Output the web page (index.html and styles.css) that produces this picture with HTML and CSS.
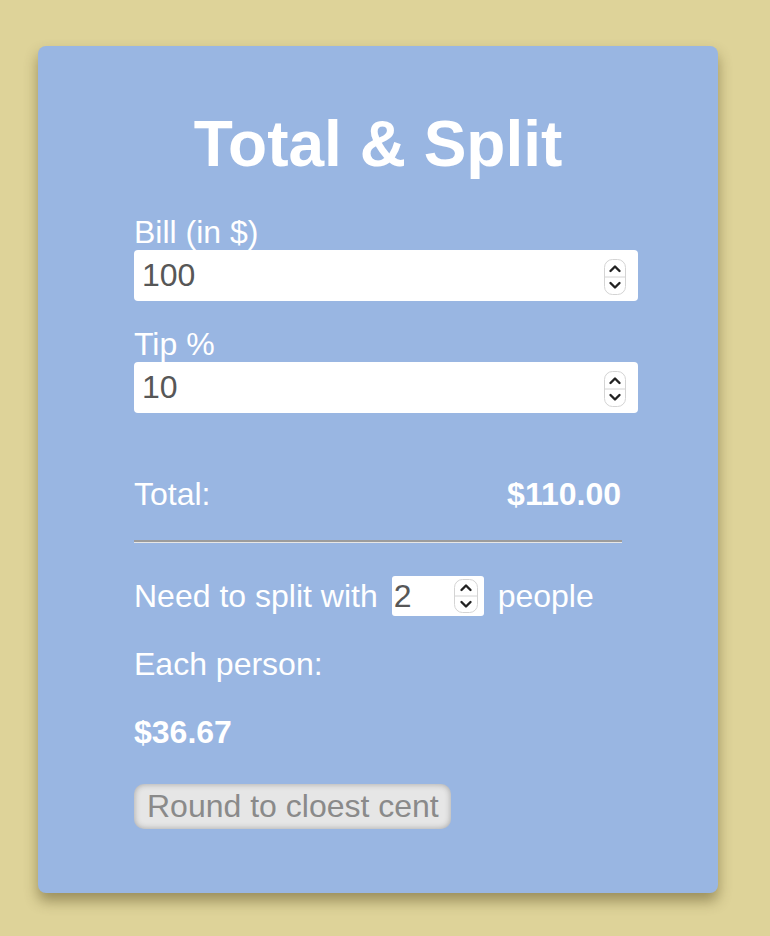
FILE: index.html
```html
<!DOCTYPE html>
<html lang="en">
<head>
  <meta charset="UTF-8" />
  <title>Total &amp; Split</title>
  <link rel="stylesheet" href="styles.css">
</head>
<body>

<div class="card">
  <h1>Total &amp; Split</h1>

  <label class="label" for="bill">Bill (in $)</label>
  <div class="field">
    <input type="text" id="bill" value="100" />
    <svg class="spin" width="22" height="36" viewBox="0 0 22 36">
      <rect x="0.5" y="0.5" width="21" height="35" rx="8" fill="#fff" stroke="#d4d4d4" />
      <line x1="1" y1="18" x2="21" y2="18" stroke="#d4d4d4" />
      <path d="M6.5 12 L11 7.5 L15.5 12" fill="none" stroke="#222" stroke-width="2.4" stroke-linecap="round" stroke-linejoin="round" />
      <path d="M6.5 24 L11 28.5 L15.5 24" fill="none" stroke="#222" stroke-width="2.4" stroke-linecap="round" stroke-linejoin="round" />
    </svg>
  </div>

  <label class="label tip" for="tip">Tip %</label>
  <div class="field">
    <input type="text" id="tip" value="10" />
    <svg class="spin" width="22" height="36" viewBox="0 0 22 36">
      <rect x="0.5" y="0.5" width="21" height="35" rx="8" fill="#fff" stroke="#d4d4d4" />
      <line x1="1" y1="18" x2="21" y2="18" stroke="#d4d4d4" />
      <path d="M6.5 12 L11 7.5 L15.5 12" fill="none" stroke="#222" stroke-width="2.4" stroke-linecap="round" stroke-linejoin="round" />
      <path d="M6.5 24 L11 28.5 L15.5 24" fill="none" stroke="#222" stroke-width="2.4" stroke-linecap="round" stroke-linejoin="round" />
    </svg>
  </div>

  <div class="total-row">
    <span>Total:</span>
    <strong>$110.00</strong>
  </div>

  <hr class="divider" />

  <div class="split-row">
    <span>Need to split with</span>
    <div class="field small">
      <input type="text" value="2" />
      <svg class="spin" width="24" height="34" viewBox="0 0 24 34">
        <rect x="0.5" y="0.5" width="23" height="33" rx="8" fill="#fff" stroke="#d4d4d4" />
        <line x1="1" y1="17" x2="23" y2="17" stroke="#d4d4d4" />
        <path d="M7.5 11 L12 6.5 L16.5 11" fill="none" stroke="#222" stroke-width="2.4" stroke-linecap="round" stroke-linejoin="round" />
        <path d="M7.5 23 L12 27.5 L16.5 23" fill="none" stroke="#222" stroke-width="2.4" stroke-linecap="round" stroke-linejoin="round" />
      </svg>
    </div>
    <span>people</span>
  </div>

  <p class="each">Each person:</p>
  <p class="amount">$36.67</p>

  <button class="round-btn" disabled>Round to cloest cent</button>
</div>

</body>
</html>
```

FILE: styles.css
```css
:root {
  --bg: #ded399;
  --card: #99b6e2;
  --text: #fff;
  --input-text: #575757;
  --font: 'Liberation Sans', Arial, sans-serif;
  --size: 32px;
}

* {
  box-sizing: border-box;
  margin: 0;
  padding: 0;
}

html {
  background-color: var(--bg);
}

body {
  font-family: var(--font);
  font-size: var(--size);
  color: var(--text);
  min-height: 936px;
  padding: 46px 52px 43px 38px;
}

.card {
  width: 680px;
  height: 847px;
  background-color: var(--card);
  border-radius: 8px;
  padding: 62px 96px 0;
  box-shadow: 0 8px 14px rgba(70, 60, 20, 0.45);
}

h1 {
  font-size: 64px;
  line-height: 72px;
  text-align: center;
  margin-bottom: 34px;
}

.label {
  display: block;
  line-height: 36px;
}

.label.tip {
  margin-top: 25px;
}

.field {
  width: calc(100% + 16px);
  height: 51px;
  background: #fff;
  border-radius: 4px;
  display: flex;
  align-items: center;
  padding: 0 12px 0 8px;
}

.field input {
  flex: 1;
  min-width: 0;
  border: none;
  outline: none;
  background: transparent;
  font-family: var(--font);
  font-size: var(--size);
  color: var(--input-text);
}

.spin {
  flex: none;
  margin-top: 2px;
}

.total-row {
  display: flex;
  justify-content: space-between;
  line-height: 36px;
  margin-top: 63px;
}

.total-row strong {
  margin-right: 1px;
}

.divider {
  border: none;
  border-top: 2px solid #9c9c9c;
  border-bottom: 1px solid #e6e6e6;
  margin-top: 28px;
}

.split-row {
  display: flex;
  align-items: center;
  gap: 14px;
  line-height: 36px;
  margin-top: 33px;
}

.field.small {
  width: 92px;
  height: 40px;
  border-radius: 3px;
  padding: 0 6px 0 2px;
}

.field.small .spin {
  margin-top: 0;
}

.each,
.amount {
  line-height: 36px;
}

.each {
  margin-top: 30px;
}

.amount {
  font-weight: bold;
  margin-top: 32px;
}

.round-btn {
  margin-top: 34px;
  height: 45px;
  padding: 0 12px 0 13px;
  font-family: var(--font);
  font-size: var(--size);
  color: #8a8a8a;
  background: #e6e6e6;
  border: none;
  border-radius: 10px;
  box-shadow: inset 0 0 6px rgba(0, 0, 0, 0.3);
}
```
